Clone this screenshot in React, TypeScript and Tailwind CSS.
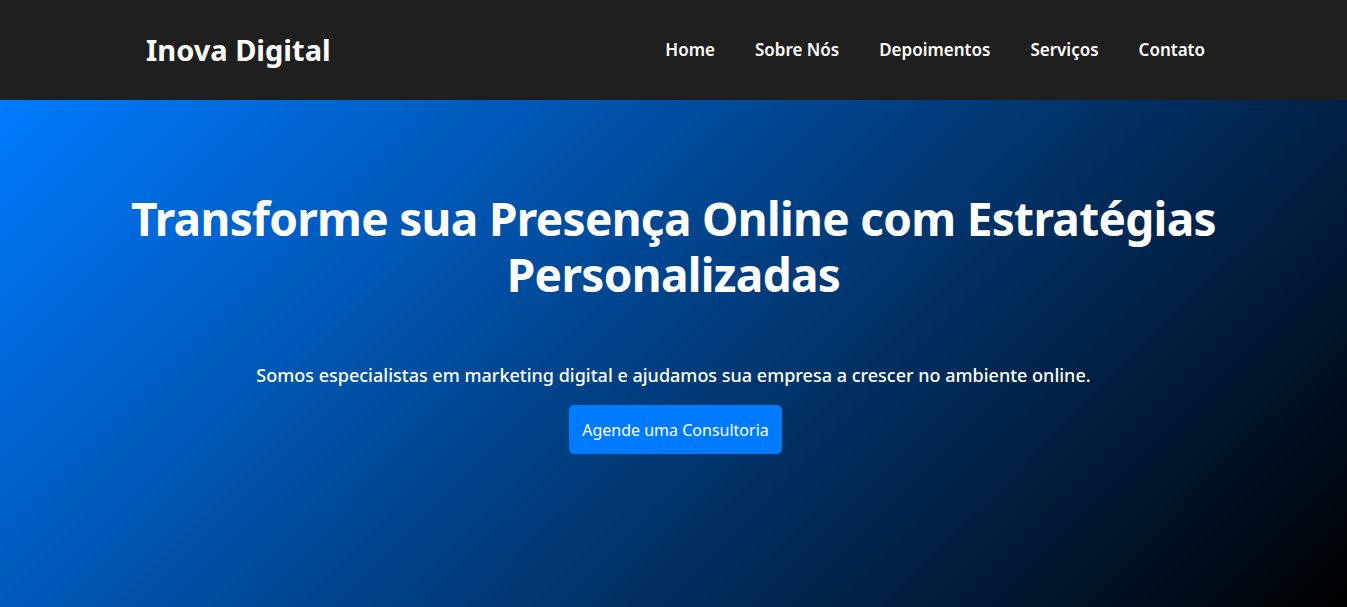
export default function App() {
  const font = { fontFamily: '"Noto Sans", "Open Sans", sans-serif' };
  return (
    <div className="min-h-screen" style={font}>
      <header className="bg-[#1f1f1f] h-[100px] flex items-center">
        <div className="w-full flex items-center justify-between pl-[146px] pr-[142px]">
          <div className="text-white font-bold text-[29px]">Inova Digital</div>
          <nav className="flex gap-[40px] text-white font-semibold text-[17px]">
            <a>Home</a>
            <a>Sobre Nós</a>
            <a>Depoimentos</a>
            <a>Serviços</a>
            <a>Contato</a>
          </nav>
        </div>
      </header>
      <section className="h-[507px] bg-[linear-gradient(135deg,#007bff,#000)] flex flex-col items-center text-white text-center pt-[90px] px-[20px]">
        <h1 className="font-bold text-[46px] leading-[56px] tracking-[-0.7px] max-w-[1100px]">
          Transforme sua Presença Online com Estratégias Personalizadas
        </h1>
        <p className="mt-[60px] text-[18px] font-medium">
          Somos especialistas em marketing digital e ajudamos sua empresa a crescer no ambiente online.
        </p>
        <button className="mt-[16px] ml-[4px] bg-[#007bff] rounded-[5px] w-[213px] h-[49px] text-[16px]">
          Agende uma Consultoria
        </button>
      </section>
    </div>
  );
}
